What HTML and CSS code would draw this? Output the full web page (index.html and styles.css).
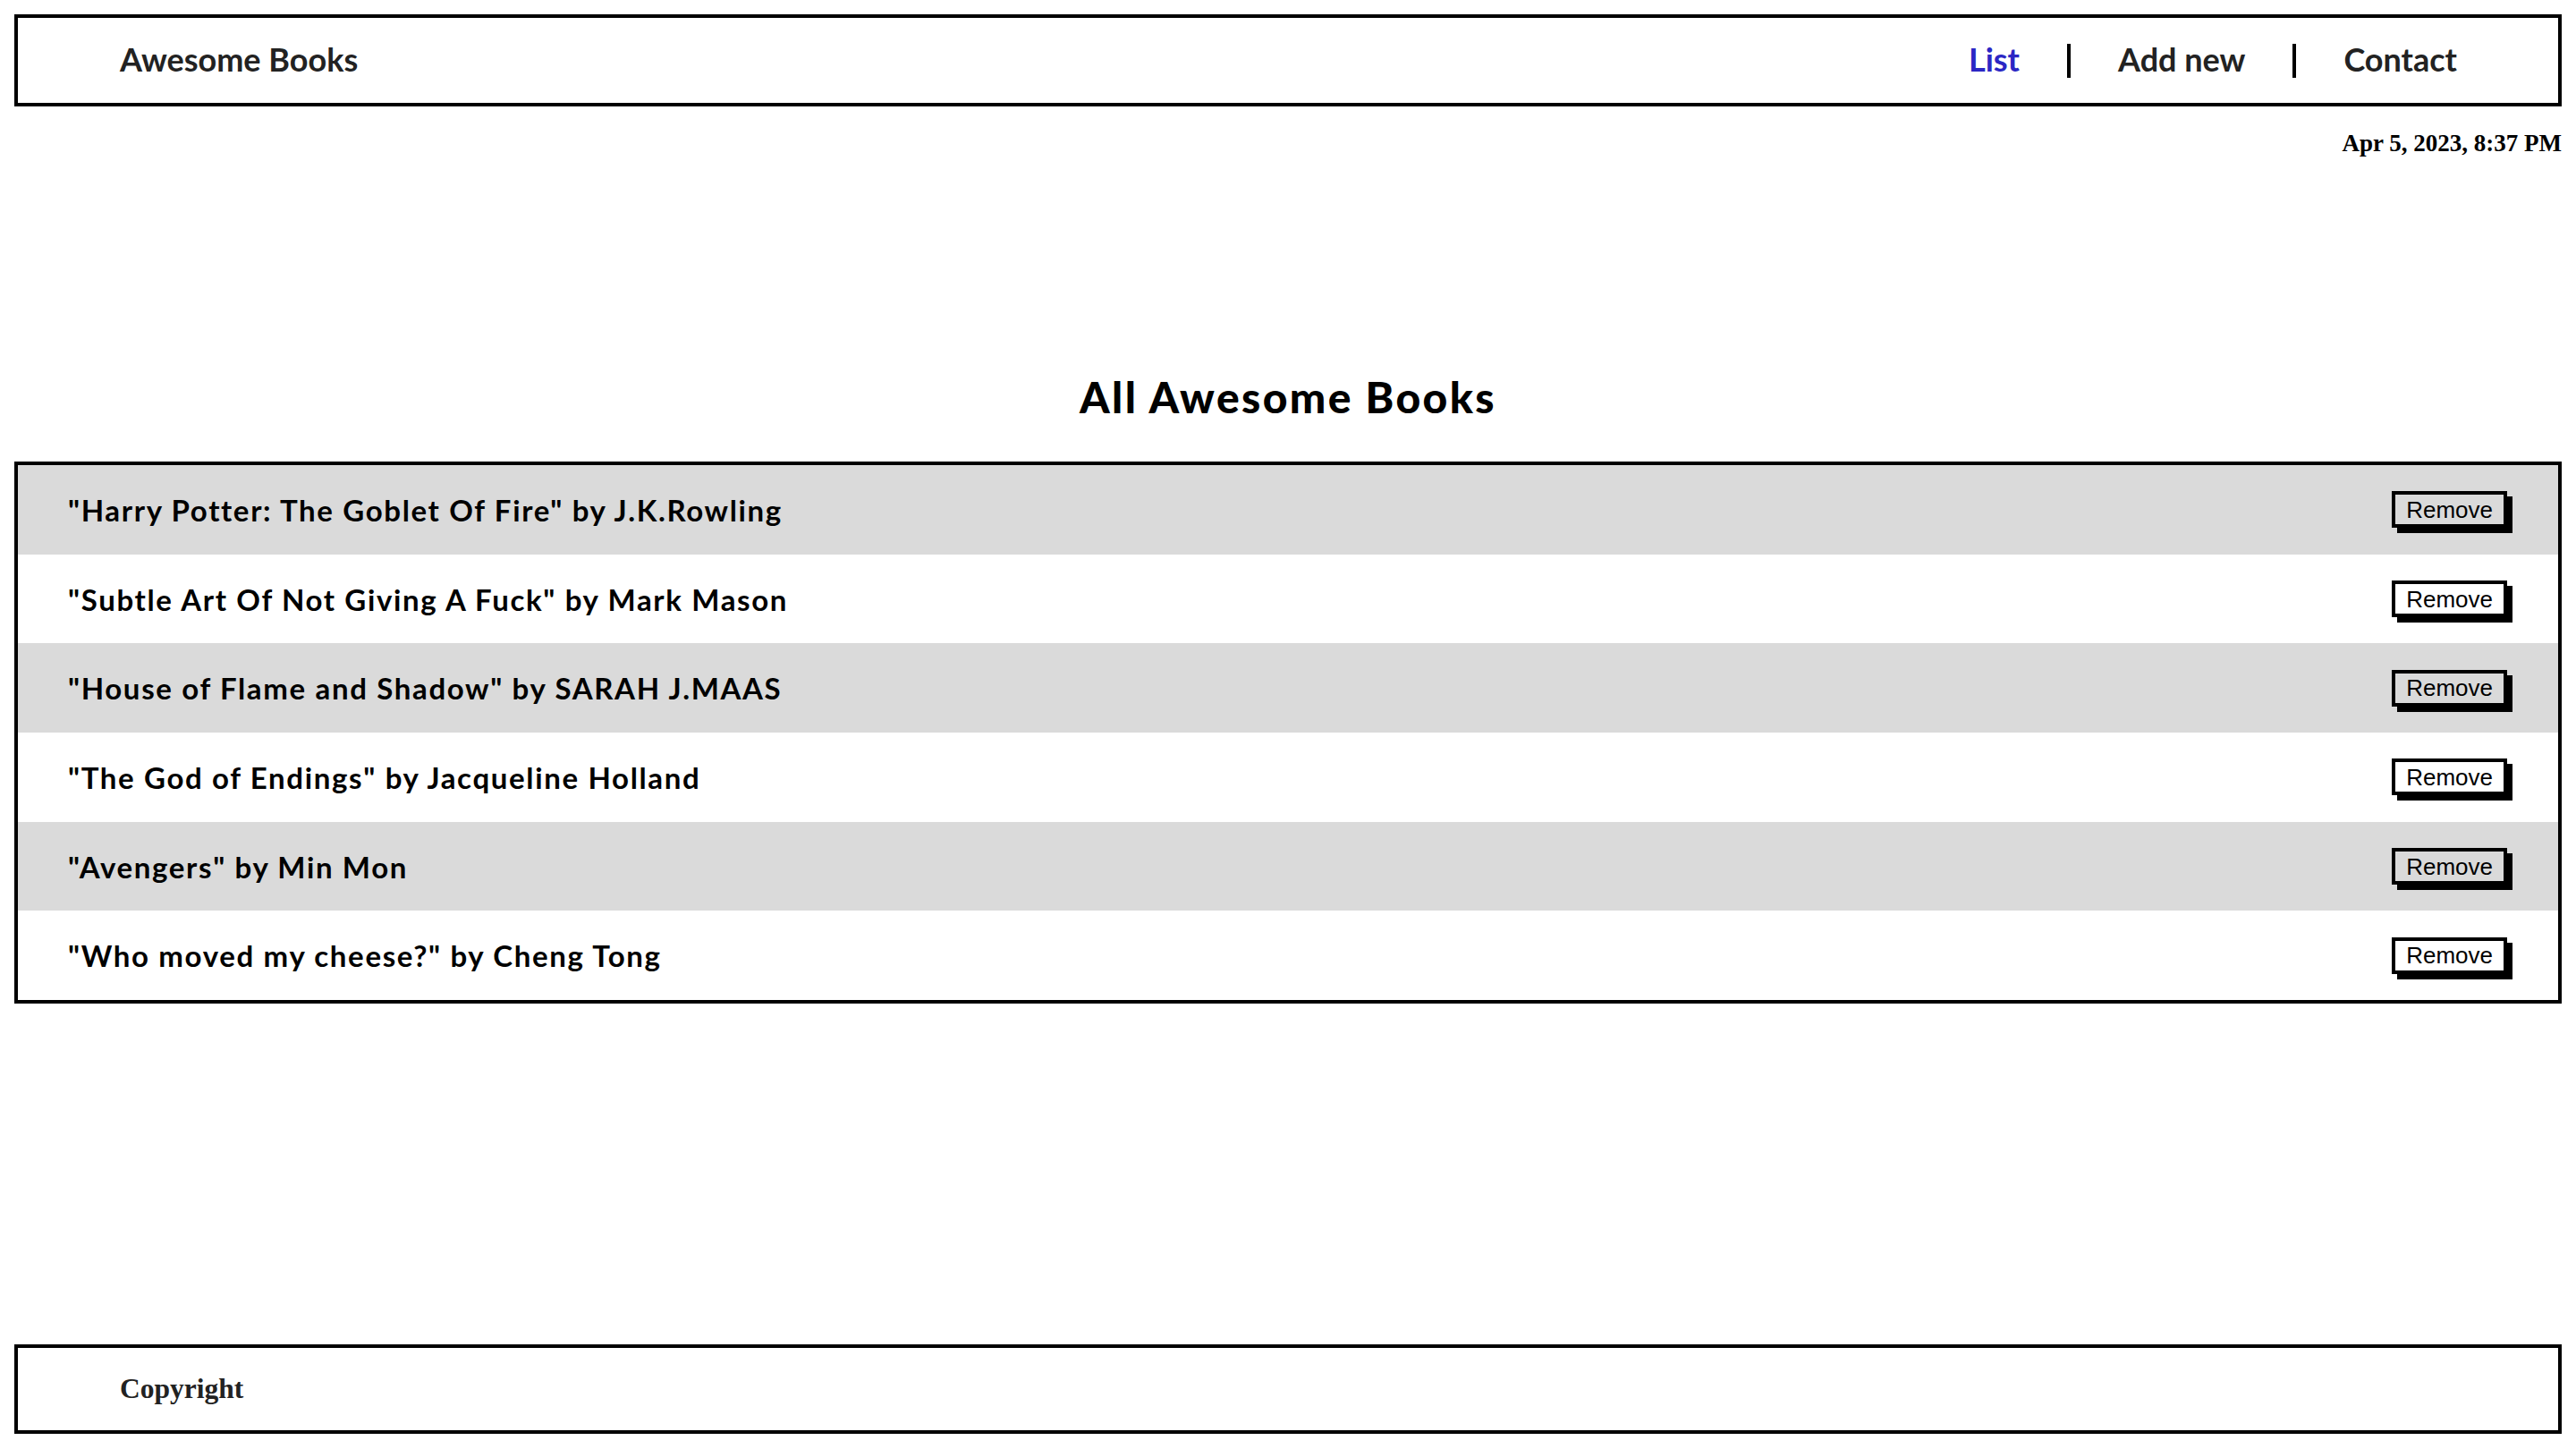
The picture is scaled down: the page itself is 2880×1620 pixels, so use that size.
FILE: index.html
```html
<!DOCTYPE html>
<html lang="en">
<head>
<meta charset="utf-8">
<title>Awesome Books</title>
<link rel="stylesheet" href="styles.css">
</head>
<body>
<header class="site-header">
  <h1 class="logo">Awesome Books</h1>
  <nav class="nav">
    <ul class="nav-list">
      <li class="nav-item"><a class="nav-link active" href="#">List</a></li>
      <li class="nav-item"><a class="nav-link" href="#">Add new</a></li>
      <li class="nav-item"><a class="nav-link" href="#">Contact</a></li>
    </ul>
  </nav>
</header>
<p class="date">Apr 5, 2023, 8:37 PM</p>
<main class="main">
  <h2 class="title">All Awesome Books</h2>
  <ul class="books">
    <li class="book"><span class="book-text">"Harry Potter: The Goblet Of Fire" by J.K.Rowling</span><button class="remove">Remove</button></li>
    <li class="book"><span class="book-text">"Subtle Art Of Not Giving A Fuck" by Mark Mason</span><button class="remove">Remove</button></li>
    <li class="book"><span class="book-text">"House of Flame and Shadow" by SARAH J.MAAS</span><button class="remove">Remove</button></li>
    <li class="book"><span class="book-text">"The God of Endings" by Jacqueline Holland</span><button class="remove">Remove</button></li>
    <li class="book"><span class="book-text">"Avengers" by Min Mon</span><button class="remove">Remove</button></li>
    <li class="book"><span class="book-text">"Who moved my cheese?" by Cheng Tong</span><button class="remove">Remove</button></li>
  </ul>
</main>
<footer class="site-footer">
  <p class="copyright">Copyright</p>
</footer>
</body>
</html>
```
FILE: styles.css
```css
* { box-sizing: border-box; }

html, body { margin: 0; }

body {
  min-height: 100vh;
  padding: 16px 16px 17px;
  display: flex;
  flex-direction: column;
  font-family: Lato, "Open Sans", sans-serif;
  background: #fff;
  color: #000;
}

.site-header {
  height: 103px;
  border: 4px solid #000;
  display: flex;
  align-items: center;
  justify-content: space-between;
  padding: 0 60px 0 114px;
}

.logo {
  margin: 0 0 4px;
  font-size: 36px;
  font-weight: 700;
  color: #222;
  line-height: 1;
}

.nav-list {
  list-style: none;
  margin: 0;
  padding: 0;
  display: flex;
  align-items: center;
}

.nav-item {
  height: 38px;
  display: flex;
  align-items: center;
}

.nav-item + .nav-item {
  border-left: 4px solid #000;
}

.nav-link {
  margin-bottom: 4px;
  padding: 0 53px;
  font-size: 36px;
  font-weight: 700;
  color: #222;
  text-decoration: none;
  line-height: 1;
}

.nav-link.active { color: #2b27c4; }

.date {
  margin: 26px 0 0;
  text-align: right;
  font-family: "Liberation Serif", serif;
  font-weight: 700;
  font-size: 27px;
  line-height: 30px;
}

.main { flex: 1; }

.title {
  margin: 240px 0 43px;
  text-align: center;
  font-size: 48px;
  font-weight: 900;
  line-height: 58px;
  letter-spacing: 0.05em;
}

.books {
  list-style: none;
  margin: 0;
  padding: 0;
  border: 4px solid #000;
}

.book {
  height: 99.7px;
  display: flex;
  align-items: center;
  justify-content: space-between;
  padding: 0 57px 0 56px;
}

.book:nth-child(odd) { background: #dadada; }

.book-text {
  font-size: 33px;
  font-weight: 700;
  letter-spacing: 0.05em;
}

.remove {
  height: 41px;
  padding: 0 12px;
  border: 4px solid #000;
  background: transparent;
  color: #000;
  font-family: "Liberation Sans", Arial, sans-serif;
  font-size: 26px;
  line-height: 1;
  box-shadow: 6px 6px 0 #000;
  cursor: pointer;
}

.site-footer {
  height: 100px;
  border: 4px solid #000;
  display: flex;
  align-items: center;
  padding: 0 114px;
}

.copyright {
  margin: 0;
  font-family: "Liberation Serif", serif;
  font-weight: 700;
  font-size: 31.5px;
  color: #222;
}
```
